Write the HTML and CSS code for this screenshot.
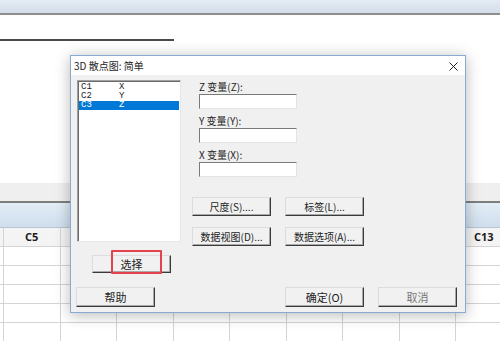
FILE: index.html
```html
<!DOCTYPE html>
<html>
<head>
    <title>3D 散点图</title>
    <link rel="stylesheet" href="styles.css">
</head>
<body>
    <div class="topbar"></div>
    <div class="sheet-top"><div class="rule"></div></div>
    <div class="tabs"></div>
    <div class="colbar"></div>
    <div class="grid">
        <div class="cell hd"></div>
        <div class="cell hd">C5</div>
        <div class="cell hd"></div>
        <div class="cell hd"></div>
        <div class="cell hd"></div>
        <div class="cell hd"></div>
        <div class="cell hd"></div>
        <div class="cell hd"></div>
        <div class="cell hd"></div>
        <div class="cell hd">C13</div>
        <div class="cell"></div><div class="cell"></div><div class="cell"></div><div class="cell"></div><div class="cell"></div><div class="cell"></div><div class="cell"></div><div class="cell"></div><div class="cell"></div><div class="cell"></div>
        <div class="cell"></div><div class="cell"></div><div class="cell"></div><div class="cell"></div><div class="cell"></div><div class="cell"></div><div class="cell"></div><div class="cell"></div><div class="cell"></div><div class="cell"></div>
        <div class="cell"></div><div class="cell"></div><div class="cell"></div><div class="cell"></div><div class="cell"></div><div class="cell"></div><div class="cell"></div><div class="cell"></div><div class="cell"></div><div class="cell"></div>
        <div class="cell"></div><div class="cell"></div><div class="cell"></div><div class="cell"></div><div class="cell"></div><div class="cell"></div><div class="cell"></div><div class="cell"></div><div class="cell"></div><div class="cell"></div>
        <div class="cell"></div><div class="cell"></div><div class="cell"></div><div class="cell"></div><div class="cell"></div><div class="cell"></div><div class="cell"></div><div class="cell"></div><div class="cell"></div><div class="cell"></div>
    </div>

    <div class="dialog">
        <div class="titlebar">
            <span class="title">3D 散点图: 简单</span>
            <svg class="close" width="9" height="9" viewBox="0 0 9 9">
                <path d="M0.5 0.5 L8.5 8.5 M8.5 0.5 L0.5 8.5" stroke="#222" stroke-width="1"/>
            </svg>
        </div>
        <div class="client">
            <div class="main">
                <div class="left">
                    <div class="listbox">
                        <div class="item"><span class="col">C1</span><span>X</span></div>
                        <div class="item"><span class="col">C2</span><span>Y</span></div>
                        <div class="item selected"><span class="col">C3</span><span>Z</span></div>
                    </div>
                    <button class="btn select-btn">选择<span class="mark"></span></button>
                </div>
                <div class="right">
                    <div class="fields">
                        <label class="field-label">Z 变量(Z):</label>
                        <div class="input"></div>
                        <label class="field-label">Y 变量(Y):</label>
                        <div class="input"></div>
                        <label class="field-label">X 变量(X):</label>
                        <div class="input"></div>
                    </div>
                    <div class="btn-grid">
                        <button class="btn">尺度(S)....</button>
                        <button class="btn">标签(L)...</button>
                        <button class="btn">数据视图(D)...</button>
                        <button class="btn">数据选项(A)...</button>
                    </div>
                </div>
            </div>
            <div class="bottom">
                <button class="btn tall">帮助</button>
                <div class="spacer"></div>
                <button class="btn tall">确定(O)</button>
                <button class="btn tall faded">取消</button>
            </div>
        </div>
    </div>
</body>
</html>
```

FILE: styles.css
```css
body {
    margin: 0;
    width: 500px;
    height: 341px;
    overflow: hidden;
    position: relative;
    background-color: #fff;
    font-family: "Noto Sans CJK SC", "Noto Sans", sans-serif;
    color: #1e1e1e;
}

.topbar {
    height: 13px;
    background: linear-gradient(#e4ebf3, #d3dde9);
    border-bottom: 2px solid #8e8e8e;
}

.sheet-top {
    height: 168px;
    overflow: hidden;
}

.rule {
    margin-top: 24px;
    width: 174px;
    height: 2px;
    background-color: #4a4a4a;
}

.tabs {
    height: 18px;
    background-color: #efefef;
    border-bottom: 2px solid #7e7e7e;
}

.colbar {
    height: 24px;
    background: linear-gradient(#e3edf7, #cfdded);
    border-bottom: 1px solid #b9c5d1;
}

.grid {
    display: grid;
    grid-template-columns: 4px repeat(9, 56.5px);
    grid-auto-rows: 19px;
}

.cell {
    box-sizing: border-box;
    border-right: 1px solid #d4d4d4;
    border-bottom: 1px solid #d4d4d4;
}

.cell.hd {
    background-color: #f4f4f4;
    font-family: "Open Sans", sans-serif;
    font-weight: bold;
    font-size: 11px;
    line-height: 18px;
    text-align: center;
    color: #1a1a1a;
}

/* dialog window */
.dialog {
    position: absolute;
    left: 70px;
    top: 55px;
    width: 394px;
    border: 1px solid #86acd4;
    background-color: #f0f0f0;
    box-shadow: 0 2px 14px rgba(0, 0, 0, 0.28);
}

.titlebar {
    height: 19px;
    background-color: #fff;
    display: flex;
    align-items: center;
    padding: 0 7px 0 3px;
}

.title {
    font-size: 10px;
    flex: 1;
}

.close {
    display: block;
    margin-top: 1px;
}

.client {
    height: 227px;
    padding: 5px 8px 5px 5px;
    display: flex;
    flex-direction: column;
}

.main {
    display: flex;
    height: 194px;
}

.left {
    width: 104px;
    margin-left: 1px;
}

.listbox {
    box-sizing: border-box;
    width: 104px;
    height: 162px;
    background-color: #fff;
    border-top: 1px solid #a0a0a0;
    border-left: 1px solid #a0a0a0;
    border-right: 1px solid #e6e6e6;
    border-bottom: 1px solid #e6e6e6;
    box-shadow: inset 1px 1px 0 #6a6a6a;
    padding: 2px 1px 0 1px;
    font-family: "Liberation Mono", monospace;
    font-size: 9px;
}

.item {
    height: 9px;
    line-height: 9px;
    padding-left: 2px;
    display: flex;
}

.item .col {
    width: 38px;
}

.item.selected {
    background-color: #0078d7;
    color: #fff;
}

.btn {
    box-sizing: border-box;
    width: 79px;
    height: 19px;
    padding: 0;
    background-color: #f1f1f1;
    border-top: 1px solid #dcdcdc;
    border-left: 1px solid #dcdcdc;
    border-right: 1px solid #3a3a3a;
    border-bottom: 1px solid #3a3a3a;
    box-shadow: inset -1px -1px 0 #a9a9a9;
    font-family: "Noto Sans CJK SC", "Noto Sans", sans-serif;
    font-size: 10px;
    color: #1e1e1e;
    text-align: center;
    line-height: 16px;
    white-space: nowrap;
}

.btn.tall {
    height: 20px;
    font-size: 11px;
}

.btn.faded {
    color: #777;
}

.select-btn {
    display: block;
    position: relative;
    margin: 13px 0 0 15px;
    height: 18px;
    font-size: 11px;
}

.mark {
    position: absolute;
    left: 18px;
    top: -6px;
    width: 51px;
    height: 24px;
    box-sizing: border-box;
    border: 2.5px solid #e4434e;
    border-radius: 1px;
}

.right {
    margin-left: 11px;
}

.fields {
    margin-left: 7px;
    padding-top: 1px;
    display: flex;
    flex-direction: column;
}

.field-label {
    font-size: 10px;
    line-height: 12px;
    height: 12px;
    margin-bottom: 1px;
}

.input {
    box-sizing: border-box;
    width: 98px;
    height: 15px;
    background-color: #fff;
    border-top: 1px solid #7a7a7a;
    border-left: 1px solid #7a7a7a;
    border-right: 1px solid #e3e3e3;
    border-bottom: 1px solid #e3e3e3;
    margin-bottom: 6px;
}

.btn-grid {
    margin-top: 14px;
    display: grid;
    grid-template-columns: 79px 79px;
    column-gap: 14px;
    row-gap: 11px;
}

.bottom {
    margin-top: 13px;
    display: flex;
    gap: 14px;
}

.spacer {
    flex: 1;
}
```
